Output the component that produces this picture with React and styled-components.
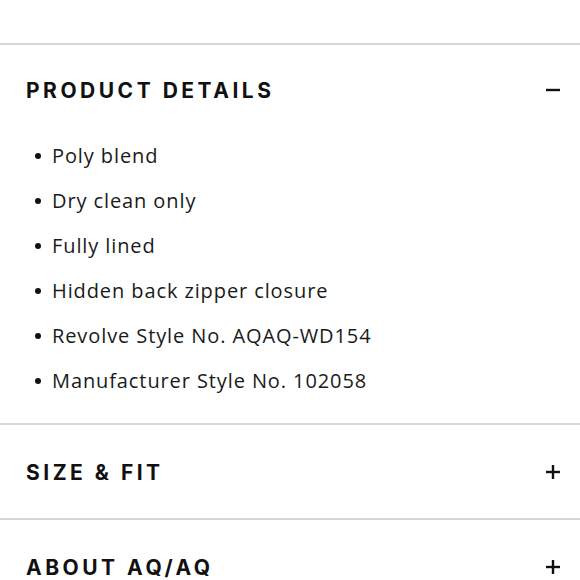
import React from "react";
import styled, { createGlobalStyle } from "styled-components";

const Global = createGlobalStyle`
  html, body { margin: 0; padding: 0; background: #fff; }
  body { font-family: "Open Sans", "Lato", sans-serif; color: #111; }
`;

const Page = styled.div`
  width: 580px;
  padding-top: 43px;
`;

const Section = styled.section`
  border-top: 2px solid #d6d6d6;
`;

const Header = styled.div`
  display: flex;
  align-items: center;
  justify-content: space-between;
  height: ${(p) => (p.open ? "88px" : "93px")};
  padding: ${(p) => (p.open ? "2px" : "1px")} 20px 0 26px;
  box-sizing: border-box;
`;

const Title = styled.h2`
  margin: 0;
  font-family: "Inter", "Liberation Sans", sans-serif;
  font-weight: 700;
  font-size: 21px;
  letter-spacing: 3.5px;
  color: #111;
`;

const List = styled.ul`
  margin: 0;
  padding: 0 0 20px 52px;
  list-style: none;
`;

const Item = styled.li`
  position: relative;
  height: 45px;
  line-height: 45px;
  font-size: 20px;
  letter-spacing: 0.9px;
  color: #1a1a1a;
  &::before {
    content: "";
    position: absolute;
    left: -17px;
    top: 20px;
    width: 6px;
    height: 6px;
    border-radius: 50%;
    background: #111;
  }
`;

const Toggle = ({ open }) => (
  <svg width="14" height="14" viewBox="0 0 14 14">
    <path d="M0 7h14" stroke="#111" strokeWidth="2.4" />
    {!open && <path d="M7 0v14" stroke="#111" strokeWidth="2.4" />}
  </svg>
);

const details = [
  "Poly blend",
  "Dry clean only",
  "Fully lined",
  "Hidden back zipper closure",
  "Revolve Style No. AQAQ-WD154",
  "Manufacturer Style No. 102058",
];

export default function App() {
  return (
    <Page>
      <Global />
      <Section>
        <Header open>
          <Title>PRODUCT DETAILS</Title>
          <Toggle open />
        </Header>
        <List>
          {details.map((d) => (
            <Item key={d}>{d}</Item>
          ))}
        </List>
      </Section>
      <Section>
        <Header>
          <Title>SIZE &amp; FIT</Title>
          <Toggle />
        </Header>
      </Section>
      <Section>
        <Header>
          <Title>ABOUT AQ/AQ</Title>
          <Toggle />
        </Header>
      </Section>
    </Page>
  );
}
